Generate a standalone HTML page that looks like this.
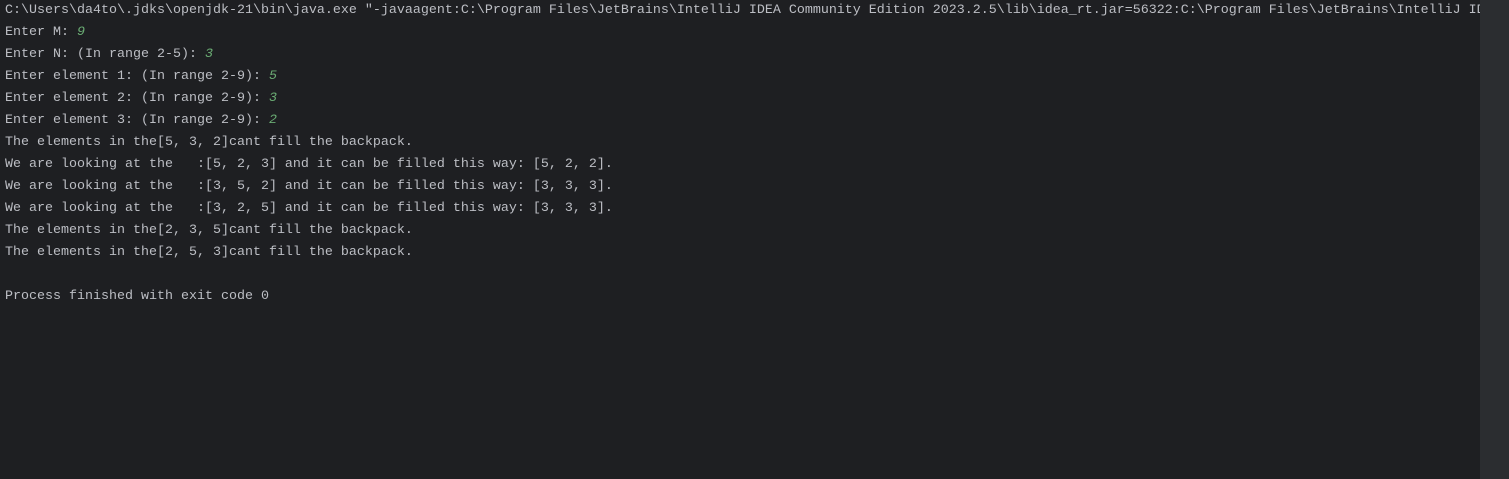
<!DOCTYPE html>
<html><head><meta charset="utf-8"><style>
html,body{margin:0;padding:0;width:1509px;height:479px;background:#1e1f22;overflow:hidden}
pre{margin:0;position:absolute;left:5px;top:0px;font-family:"Liberation Mono",monospace;font-size:13.33px;line-height:22px;color:#bcbec4;white-space:pre;width:1475px;overflow:hidden}
i{color:#6aab73}
.sb{position:absolute;left:1480px;top:0;width:29px;height:479px;background:#2b2d30}
</style></head><body>
<pre>C:\Users\da4to\.jdks\openjdk-21\bin\java.exe "-javaagent:C:\Program Files\JetBrains\IntelliJ IDEA Community Edition 2023.2.5\lib\idea_rt.jar=56322:C:\Program Files\JetBrains\IntelliJ IDEA
Enter M: <i>9</i>
Enter N: (In range 2-5): <i>3</i>
Enter element 1: (In range 2-9): <i>5</i>
Enter element 2: (In range 2-9): <i>3</i>
Enter element 3: (In range 2-9): <i>2</i>
The elements in the[5, 3, 2]cant fill the backpack.
We are looking at the   :[5, 2, 3] and it can be filled this way: [5, 2, 2].
We are looking at the   :[3, 5, 2] and it can be filled this way: [3, 3, 3].
We are looking at the   :[3, 2, 5] and it can be filled this way: [3, 3, 3].
The elements in the[2, 3, 5]cant fill the backpack.
The elements in the[2, 5, 3]cant fill the backpack.

Process finished with exit code 0</pre>
<div class="sb"></div>
</body></html>
